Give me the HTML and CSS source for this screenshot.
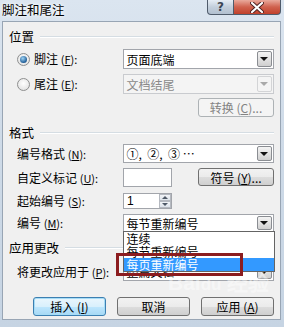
FILE: index.html
```html
<!DOCTYPE html>
<html lang="zh-CN">
<head>
  <meta charset="UTF-8">
  <title>脚注和尾注</title>
  <link rel="stylesheet" href="styles.css">
</head>
<body>

<div class="window">
  <div class="titlebar">
    <span class="title">脚注和尾注</span>
    <div class="caption-btns">
      <span class="cap help">?</span>
      <span class="cap close">
        <svg width="14" height="11" viewBox="0 0 14 11">
          <path d="M2 1 L12 10 M12 1 L2 10" stroke="#4a2020" stroke-width="4" stroke-linecap="round"/>
          <path d="M2 1 L12 10 M12 1 L2 10" stroke="#fff" stroke-width="2.2" stroke-linecap="round"/>
        </svg>
      </span>
    </div>
  </div>

  <div class="panel">
    <div class="group-title"><span>位置</span><i></i></div>

    <div class="row row-foot">
      <label class="label"><span class="radio on"></span>脚注 <span class="key">(<u>F</u>):</span></label>
      <div class="combo"><span class="value">页面底端</span><span class="arrow"></span></div>
    </div>

    <div class="row row-end">
      <label class="label"><span class="radio"></span>尾注 <span class="key">(<u>E</u>):</span></label>
      <div class="combo disabled"><span class="value">文档结尾</span><span class="arrow"></span></div>
    </div>

    <div class="row row-convert">
      <button class="btn side disabled">转换 (<u>C</u>)...</button>
    </div>

    <div class="group-title gt-format"><span>格式</span><i></i></div>

    <div class="row row-numfmt">
      <label class="label">编号格式 <span class="key">(<u>N</u>):</span></label>
      <div class="combo"><span class="value numfmt">①,&nbsp; ②,&nbsp; ③ …</span><span class="arrow"></span></div>
    </div>

    <div class="row row-custom">
      <label class="label">自定义标记 <span class="key">(<u>U</u>):</span></label>
      <div class="textbox"></div>
      <button class="btn side">符号 (<u>Y</u>)...</button>
    </div>

    <div class="row row-start">
      <label class="label">起始编号 <span class="key">(<u>S</u>):</span></label>
      <div class="spinner">
        <span class="value">1</span>
        <span class="spin"><b class="up"></b><b class="down"></b></span>
      </div>
    </div>

    <div class="row row-numbering">
      <label class="label">编号 <span class="key">(<u>M</u>):</span></label>
      <div class="combo open">
        <span class="value">每节重新编号</span><span class="arrow"></span>
        <ul class="droplist">
          <li>连续</li>
          <li>每节重新编号</li>
          <li class="selected">每页重新编号</li>
        </ul>
      </div>
    </div>

    <div class="group-title gt-apply"><span>应用更改</span><i></i></div>

    <div class="row row-applyto">
      <label class="label">将更改应用于 <span class="key">(<u>P</u>):</span></label>
      <div class="combo"><span class="value">整篇文档</span><span class="arrow"></span></div>
    </div>

    <div class="actions">
      <button class="btn default">插入 (<u>I</u>)</button>
      <button class="btn">取消</button>
      <button class="btn">应用 (<u>A</u>)</button>
    </div>
  </div>

  <div class="annotation"></div>
  <div class="watermark">Bai<span>du</span> 经验</div>
</div>

</body>
</html>
```

FILE: styles.css
```css
html, body {
  margin: 0;
  padding: 0;
}

body {
  width: 284px;
  height: 327px;
  overflow: hidden;
  font-family: "Noto Sans CJK SC", "Liberation Sans", sans-serif;
  font-size: 12px;
  color: #000;
}

.window {
  position: relative;
  width: 284px;
  height: 327px;
  background: linear-gradient(to bottom, #dbe5f0 0%, #cfdbe8 40%, #c6d4e3 100%);
}

/* title bar */

.titlebar {
  height: 21px;
  display: flex;
  justify-content: space-between;
}

.title {
  margin-left: 2px;
  font-size: 12.5px;
  line-height: 19px;
  text-shadow: 0 0 6px #fff, 0 0 3px #fff;
}

.caption-btns {
  display: flex;
  margin-right: 3px;
  height: 15px;
}

.cap {
  display: flex;
  align-items: center;
  justify-content: center;
  height: 14px;
  border: 1px solid #4f5b6b;
  border-top: none;
}

.help {
  width: 25px;
  border-radius: 0 0 0 4px;
  background: linear-gradient(to bottom, #e6edf5, #c3cfdc 50%, #b2c0d0);
  font-family: "DejaVu Sans", sans-serif;
  font-weight: bold;
  font-size: 12px;
  color: #3c4654;
  line-height: 12px;
}

.close {
  width: 46px;
  border-left: none;
  border-radius: 0 0 4px 0;
  background: linear-gradient(to bottom, #e9a99c, #d0614e 50%, #c0412c 100%);
}

/* dialog body */

.panel {
  margin: 0 3px 0 2px;
  height: 299px;
  box-sizing: border-box;
  border: 1px solid #98a5b4;
  background: #f0f0f0;
  padding: 7px 6px 0 6px;
}

.group-title {
  display: flex;
  align-items: center;
  height: 16px;
  line-height: 16px;
  font-size: 12.5px;
}

.group-title i {
  flex: 1;
  height: 1px;
  margin-left: 6px;
  background: #d5dde3;
  border-bottom: 1px solid #fff;
}

.gt-format { margin-top: 8px; }
.gt-apply { margin-top: 8px; }

.row {
  display: flex;
  align-items: center;
}

.label {
  width: 106px;
  padding-left: 8px;
  display: flex;
  align-items: center;
  white-space: pre;
  line-height: 16px;
}

.key {
  font-size: 11px;
}

u {
  text-decoration: underline;
}

.row-foot { margin-top: 4px; height: 20px; }
.row-end { margin-top: 5px; height: 20px; }
.row-convert { margin-top: 4px; height: 19px; justify-content: flex-end; }
.row-numfmt { margin-top: 3px; height: 19px; }
.row-custom { margin-top: 5px; height: 19px; }
.row-start { margin-top: 6px; height: 16px; }
.row-numbering { margin-top: 5px; height: 18px; }
.row-applyto { margin-top: 6px; height: 19px; }

/* radio */

.radio {
  width: 11px;
  height: 11px;
  margin-right: 4px;
  border-radius: 50%;
  border: 1px solid #8e8f8f;
  background: radial-gradient(circle at 50% 40%, #ffffff, #dcdcdc);
  position: relative;
}

.radio.on::after {
  content: "";
  position: absolute;
  left: 2px;
  top: 2px;
  width: 7px;
  height: 7px;
  border-radius: 50%;
  background: radial-gradient(circle at 40% 35%, #9fd4f5, #1f5c96 70%, #153f6a);
}

/* combo box */

.combo {
  position: relative;
  width: 152px;
  height: 100%;
  box-sizing: border-box;
  border: 1px solid #a2a5ab;
  background: #fff;
  display: flex;
  align-items: center;
  justify-content: space-between;
}

.combo .value {
  padding-left: 3px;
  line-height: 15px;
  white-space: nowrap;
}

.combo .arrow {
  width: 15px;
  height: calc(100% - 2px);
  margin-right: 1px;
  box-sizing: border-box;
  border: 1px solid #8a8d92;
  border-radius: 2px;
  background: linear-gradient(to bottom, #f4f4f4, #e2e2e2 50%, #cfcfcf);
  display: flex;
  align-items: center;
  justify-content: center;
}

.combo .arrow::after {
  content: "";
  border-left: 4px solid transparent;
  border-right: 4px solid transparent;
  border-top: 4px solid #111;
}

.combo.disabled {
  border-color: #c9cbcf;
  background: #f4f4f4;
  color: #8a8a8a;
}

.combo.disabled .arrow {
  border-color: #d3d4d6;
  background: #f4f4f4;
}

.combo.disabled .arrow::after {
  border-top-color: #a9a9a9;
}

.numfmt {
  font-size: 12px;
}

/* open drop-down list */

.droplist {
  position: absolute;
  left: -1px;
  top: 16px;
  width: 152px;
  box-sizing: border-box;
  margin: 0;
  padding: 0;
  list-style: none;
  background: #fff;
  border: 1px solid #646464;
  z-index: 2;
}

.droplist li {
  height: 13px;
  line-height: 13px;
  padding-left: 3px;
  overflow: hidden;
}

.droplist li.selected {
  background: #3399ff;
  color: #fff;
}

/* text box and spinner */

.textbox {
  width: 49px;
  height: 19px;
  box-sizing: border-box;
  border: 1px solid #a2a5ab;
  background: #fff;
}

.spinner {
  width: 49px;
  height: 16px;
  box-sizing: border-box;
  border: 1px solid #a2a5ab;
  background: #fff;
  display: flex;
  justify-content: space-between;
}

.spinner .value {
  padding-left: 3px;
  line-height: 14px;
  font-family: "Liberation Sans", sans-serif;
  font-size: 12px;
}

.spin {
  width: 12px;
  display: flex;
  flex-direction: column;
}

.spin b {
  flex: 1;
  border: 1px solid #b5b9c0;
  background: linear-gradient(to bottom, #f2f4f7, #dde3ea);
  display: flex;
  align-items: center;
  justify-content: center;
}

.spin .up::after {
  content: "";
  border-left: 3px solid transparent;
  border-right: 3px solid transparent;
  border-bottom: 3px solid #4e5866;
}

.spin .down::after {
  content: "";
  border-left: 3px solid transparent;
  border-right: 3px solid transparent;
  border-top: 3px solid #4e5866;
}

/* buttons */

.btn {
  font-family: inherit;
  font-size: 12px;
  line-height: 15px;
  padding: 0;
  height: 19px;
  box-sizing: border-box;
  border: 1px solid #707070;
  border-radius: 3px;
  color: #000;
  white-space: pre;
  background: linear-gradient(to bottom, #f2f2f2 0%, #ebebeb 50%, #dddddd 51%, #cfcfcf 100%);
}

.btn.side {
  width: 76px;
  margin-left: auto;
}

.row-custom .btn.side {
  height: 18px;
  align-self: flex-start;
}

.btn.disabled {
  border-color: #adb2b5;
  background: #f4f4f4;
  color: #838383;
}

.actions {
  display: flex;
  justify-content: flex-end;
  gap: 11px;
  margin-top: 16px;
}

.actions .btn {
  width: 73px;
}

.btn.default {
  border-color: #3c7fb1;
  box-shadow: inset 0 0 0 1px #a6dcf6;
  background: linear-gradient(to bottom, #eaf6fd 0%, #d9f0fc 50%, #bee6fd 51%, #a7d9f5 100%);
}

/* screenshot annotations */

.annotation {
  position: absolute;
  left: 116px;
  top: 253px;
  width: 127px;
  height: 23px;
  box-sizing: border-box;
  border: 3px solid #8b1c1f;
  z-index: 3;
}

.watermark {
  position: absolute;
  left: 168px;
  top: 266px;
  font-family: "Liberation Sans", sans-serif;
  font-weight: bold;
  font-size: 21px;
  color: rgba(255, 255, 255, 0.45);
  z-index: 1;
  pointer-events: none;
}

.watermark span {
  font-size: 17px;
}
```
